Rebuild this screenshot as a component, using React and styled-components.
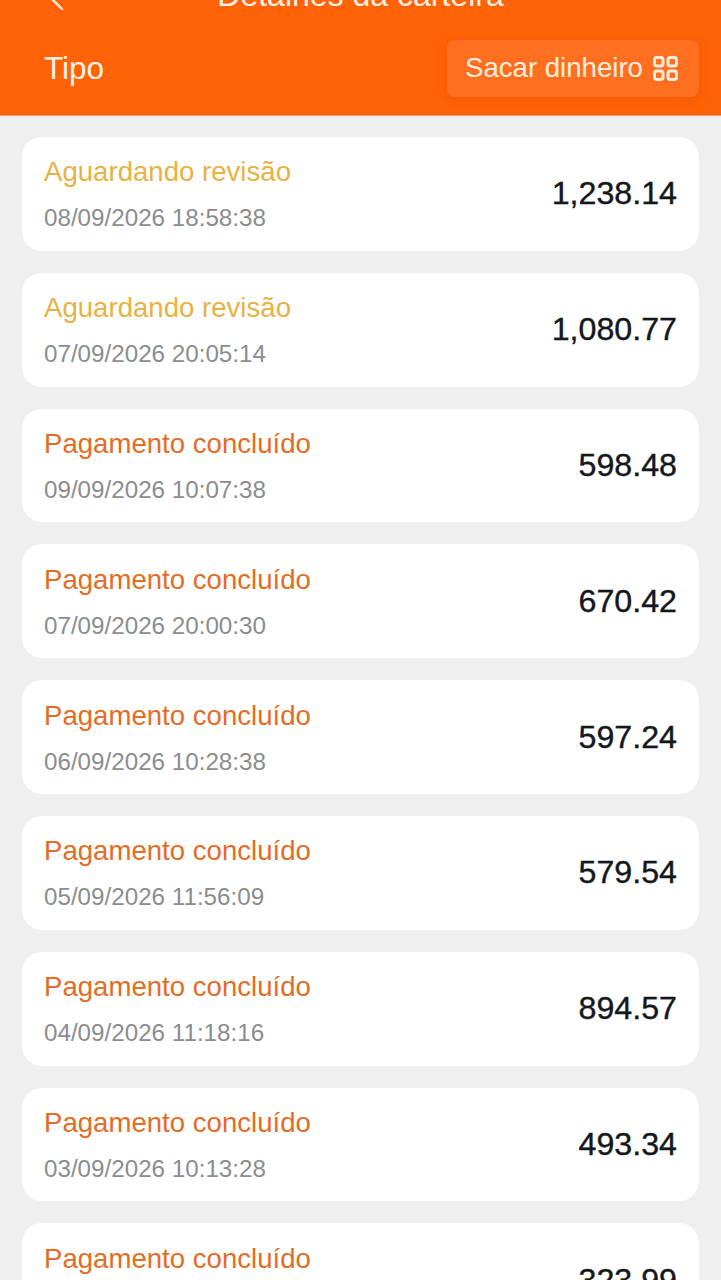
import React from "react";
import styled, { createGlobalStyle } from "styled-components";

const Global = createGlobalStyle`
  html, body { margin: 0; padding: 0; background: #efefef; }
  body { font-family: "Liberation Sans", Arial, sans-serif; }
`;
const Page = styled.div`
  width: 721px; height: 1280px; overflow: hidden; background: #efefef;
`;
const Header = styled.header`
  height: 115px; background: #ff6207; color: #fff3e6; overflow: hidden;
  border-bottom: 1px solid #f2a077; box-sizing: content-box; margin-bottom: -1px;
`;
const TitleRow = styled.div`
  height: 40px; margin-top: -25px; position: relative;
  display: flex; align-items: center; justify-content: center;
  font-size: 32px;
`;
const BackIcon = styled.svg`
  position: absolute; left: 44px; top: 2px; width: 24px; height: 36px;
`;
const TypeRow = styled.div`
  display: flex; justify-content: space-between; align-items: center;
  padding: 0 22px 0 44px; margin-top: 24px; height: 58px;
`;
const TypeLabel = styled.span`font-size: 31.5px;`;
const WithdrawButton = styled.button`
  height: 57px; width: 252px; box-sizing: border-box; border: 0; border-radius: 8px;
  background: #ff6f1f; color: #ffeedd; display: flex; align-items: center; justify-content: space-between;
  padding: 0 21px 0 18px; font: inherit; font-size: 27.6px;
  box-shadow: 0 2px 10px rgba(200, 70, 0, 0.25);
`;
const List = styled.main`
  display: flex; flex-direction: column; gap: 22px; padding: 22px 22px 0;
`;
const Card = styled.article`
  height: 113.8px; flex: none; box-sizing: border-box; background: #fff; border-radius: 20px;
  display: flex; align-items: center; justify-content: space-between; padding: 0 22px;
`;
const Info = styled.div`display: flex; flex-direction: column; gap: 17px; padding-top: 2px;`;
const Status = styled.div`
  font-size: 27.6px; line-height: 30px; color: ${p => p.$pending ? "#e7b243" : "#e36c26"};
`;
const When = styled.div`font-size: 24.2px; line-height: 28px; color: #8a8d90;`;
const Amount = styled.div`font-size: 32.2px; color: #14181c; -webkit-text-stroke: 0.4px #14181c;`;

const rows = [
  ["Aguardando revisão", "08/09/2026 18:58:38", "1,238.14", true],
  ["Aguardando revisão", "07/09/2026 20:05:14", "1,080.77", true],
  ["Pagamento concluído", "09/09/2026 10:07:38", "598.48"],
  ["Pagamento concluído", "07/09/2026 20:00:30", "670.42"],
  ["Pagamento concluído", "06/09/2026 10:28:38", "597.24"],
  ["Pagamento concluído", "05/09/2026 11:56:09", "579.54"],
  ["Pagamento concluído", "04/09/2026 11:18:16", "894.57"],
  ["Pagamento concluído", "03/09/2026 10:13:28", "493.34"],
  ["Pagamento concluído", "02/09/2026 10:41:52", "323.99"],
];

const GridIcon = () => (
  <svg width="25" height="25" viewBox="0 0 25 25" fill="none" stroke="currentColor" strokeWidth="3">
    <rect x="1.5" y="1.5" width="8.5" height="8.5" rx="2.4" />
    <rect x="15" y="1.5" width="8.5" height="8.5" rx="2.4" />
    <rect x="1.5" y="15" width="8.5" height="8.5" rx="2.4" />
    <rect x="15" y="15" width="8.5" height="8.5" rx="2.4" />
  </svg>
);

export default function App() {
  return (
    <Page>
      <Global />
      <Header>
        <TitleRow>
          <BackIcon viewBox="0 0 24 36" fill="none" stroke="currentColor" strokeWidth="2.4" strokeLinecap="round">
            <path d="M18 4 L5 19 L18 32" />
          </BackIcon>
          Detalhes da carteira
        </TitleRow>
        <TypeRow>
          <TypeLabel>Tipo</TypeLabel>
          <WithdrawButton>Sacar dinheiro <GridIcon /></WithdrawButton>
        </TypeRow>
      </Header>
      <List>
        {rows.map(([s, d, a, p]) => (
          <Card key={d}>
            <Info>
              <Status $pending={p}>{s}</Status>
              <When>{d}</When>
            </Info>
            <Amount>{a}</Amount>
          </Card>
        ))}
      </List>
    </Page>
  );
}
